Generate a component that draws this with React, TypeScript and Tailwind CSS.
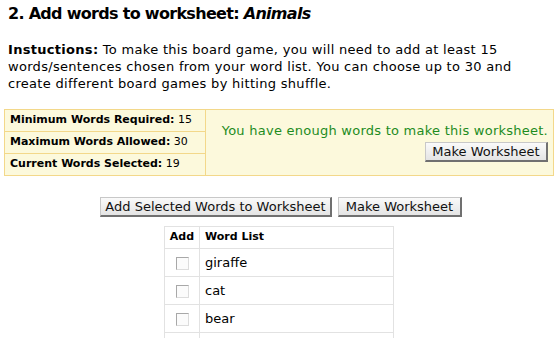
import React from 'react';

const words = ['giraffe', 'cat', 'bear', ''];

const Btn: React.FC<{ label: string; className?: string }> = ({ label, className = '' }) => (
  <button
    className={`h-[20px] border border-[#c8c8c8] border-r-[#707070] border-b-[#707070] border-r-2 border-b-2 bg-gradient-to-b from-[#fafafa] to-[#e4e4e4] text-[13px] leading-none text-[#111] font-['DejaVu_Sans',sans-serif] ${className}`}
  >
    {label}
  </button>
);

const App: React.FC = () => {
  return (
    <div className="w-[560px] h-[338px] overflow-hidden bg-white px-1 font-['DejaVu_Sans',Verdana,sans-serif] text-black">
      {/* Heading */}
      <h1 className="pl-1 pt-[4px] text-[16px] leading-[20px] font-bold tracking-[-0.7px]">
        2. Add words to worksheet: <i>Animals</i>
      </h1>

      {/* Instructions */}
      <p className="pl-1 mt-[17px] text-[13px] leading-[17px] w-[518px] tracking-[0.3px]">
        <b>Instuctions:</b> To make this board game, you will need to add at least 15 words/sentences chosen from your word list. You can choose up to 30 and create different board games by hitting shuffle.
      </p>

      {/* Status box */}
      <table className="mt-[17px] w-[550px] border-collapse bg-[#fcf9dc] text-[11px]">
        <tbody>
          <tr className="h-[22px]">
            <td className="w-[201px] border border-[#f3d88a] px-[5px]">
              <b>Minimum Words Required:</b> 15
            </td>
            <td rowSpan={3} className="border border-[#f3d88a] px-[5px] text-right align-middle">
              <div className="text-[13px] leading-[16px] text-[#1e8c1e] tracking-[0.25px]">You have enough words to make this worksheet.</div>
              <div className="mt-[3px] flex justify-end">
                <Btn label="Make Worksheet" className="w-[123px]" />
              </div>
            </td>
          </tr>
          <tr className="h-[22px]">
            <td className="border border-[#f3d88a] px-[5px]">
              <b>Maximum Words Allowed:</b> 30
            </td>
          </tr>
          <tr className="h-[22px]">
            <td className="border border-[#f3d88a] px-[5px]">
              <b>Current Words Selected:</b> 19
            </td>
          </tr>
        </tbody>
      </table>

      {/* Action buttons */}
      <div className="mt-[21px] flex justify-center gap-[6px] pl-[2px]">
        <Btn label="Add Selected Words to Worksheet" className="w-[232px]" />
        <Btn label="Make Worksheet" className="w-[124px]" />
      </div>

      {/* Word list */}
      <table className="mt-[9px] ml-[160px] w-[230px] border-collapse">
        <thead>
          <tr className="h-[22px] text-[11px] font-bold">
            <th className="w-[35px] border border-[#e2e2e2] text-center">Add</th>
            <th className="border border-[#e2e2e2] px-[5px] text-left">Word List</th>
          </tr>
        </thead>
        <tbody>
          {words.map((w, i) => (
            <tr key={i} className="h-[28px] text-[13px]">
              <td className="border border-[#e2e2e2] text-center">
                {w && (
                  <span className="inline-block align-middle w-[13px] h-[13px] border border-[#a8a8a8] border-r-[#dcdcdc] border-b-[#dcdcdc] bg-[#fbfbfb]" />
                )}
              </td>
              <td className="border border-[#e2e2e2] px-[5px]">{w}</td>
            </tr>
          ))}
        </tbody>
      </table>
    </div>
  );
};

export default App;
